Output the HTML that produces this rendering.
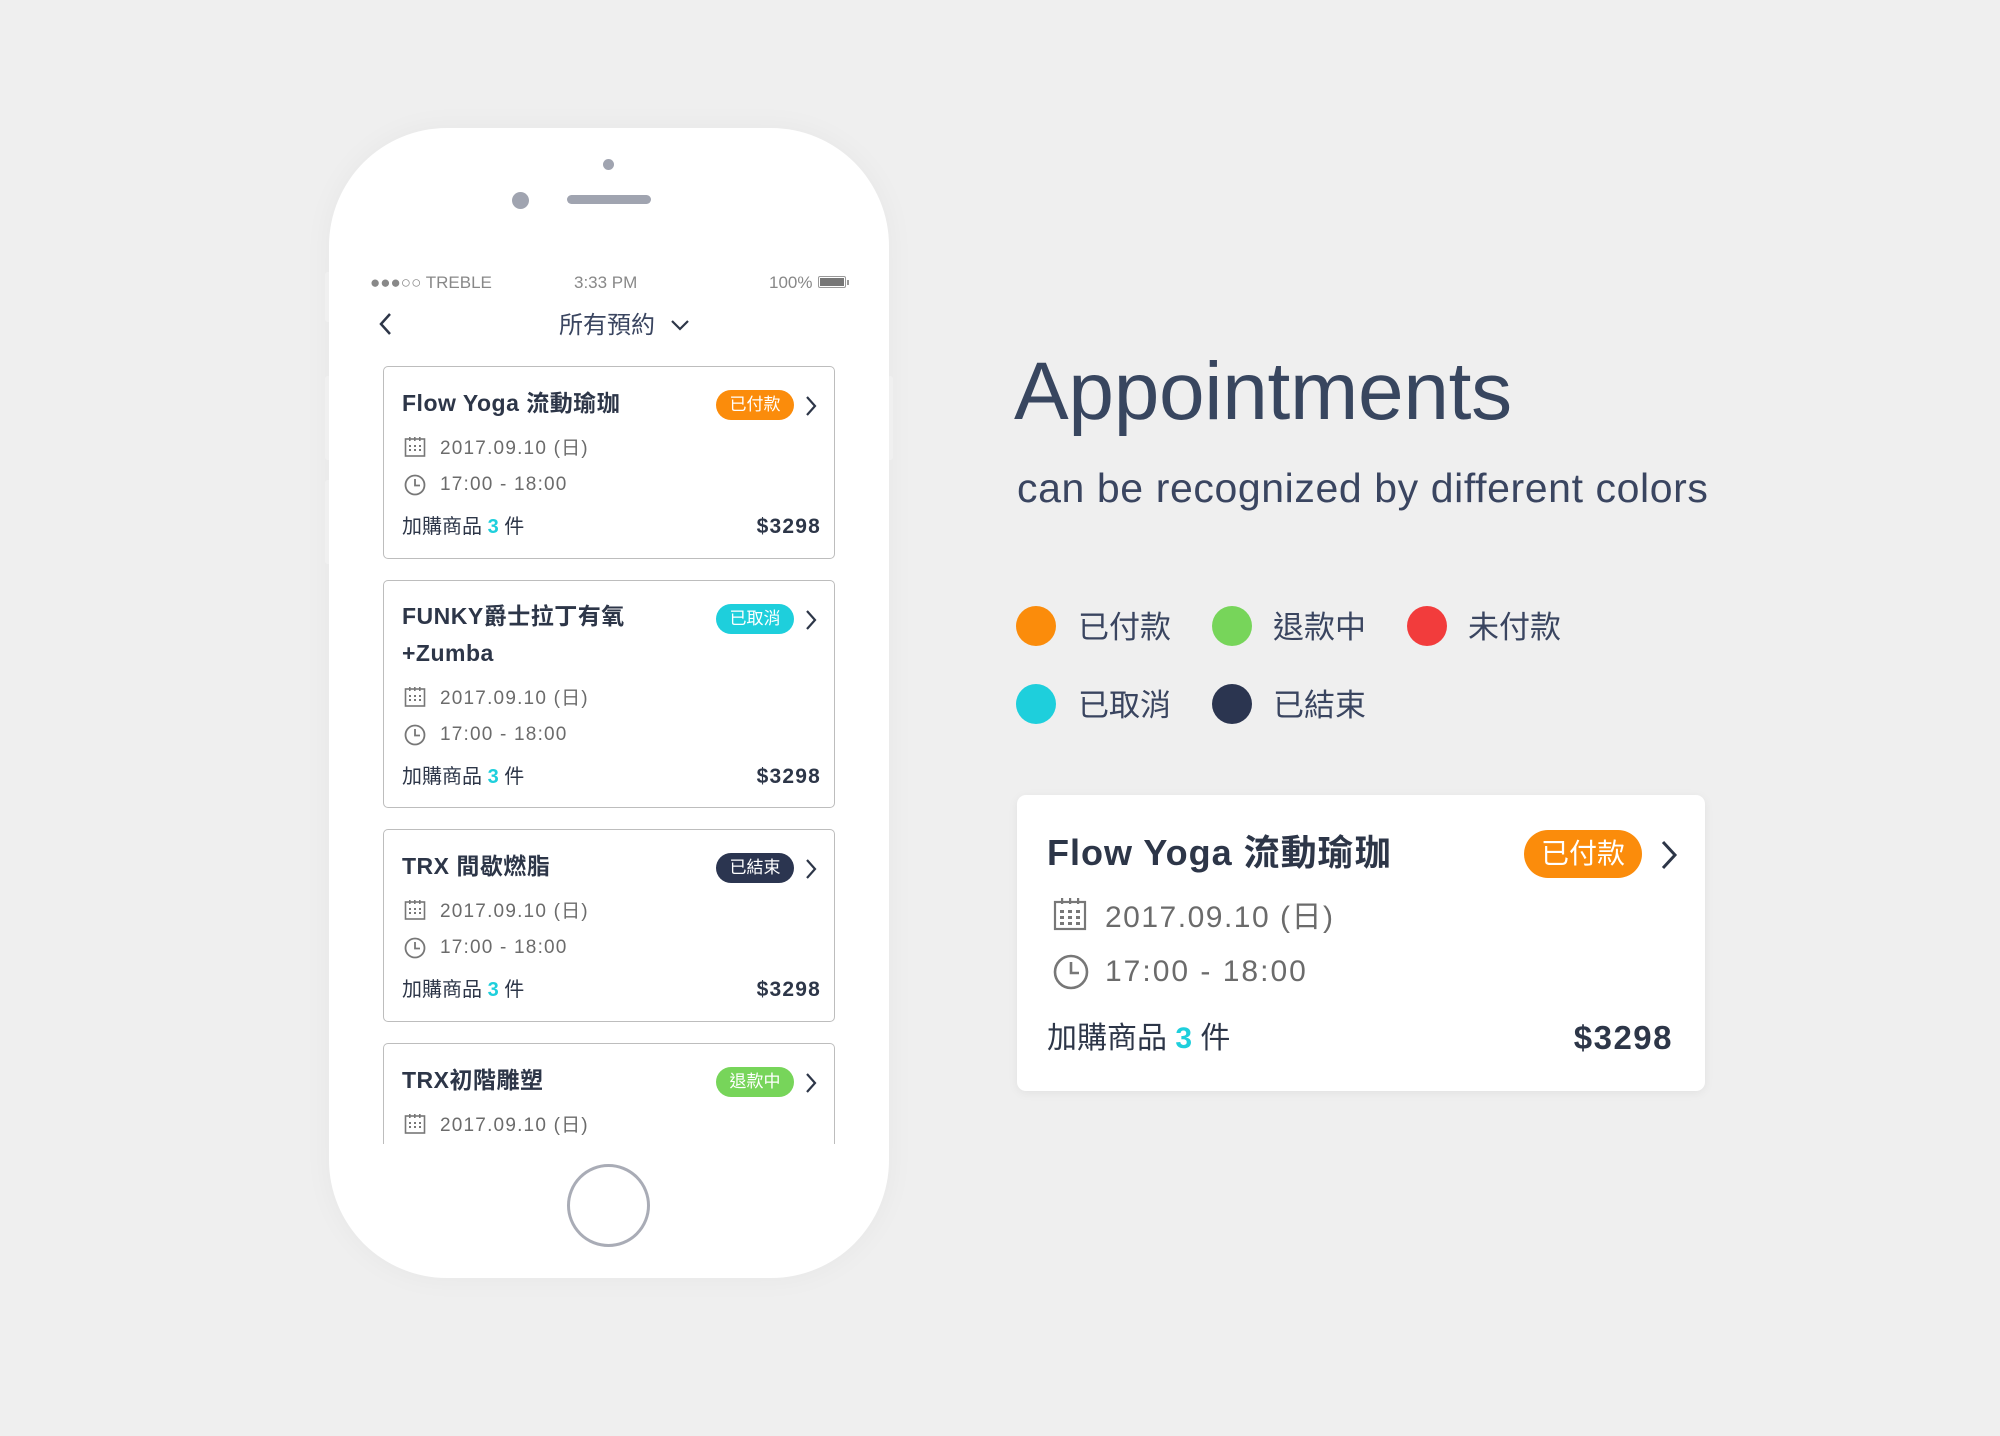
<!DOCTYPE html>
<html><head><meta charset="utf-8">
<style>
*{margin:0;padding:0;box-sizing:border-box}
body{width:2000px;height:1436px;background:#efefef;position:relative;overflow:hidden;font-family:"Liberation Sans","Noto Sans CJK TC",sans-serif;color:#2d3648}
.abs{position:absolute}
.phone{left:329px;top:128px;width:560px;height:1150px;background:#fff;border-radius:118px;box-shadow:0 0 30px rgba(0,0,0,0.04)}
.btn{background:#f4f4f4;width:6px;border-radius:3px}
.card{position:absolute;left:383px;width:452px;border:1.5px solid #bdbdbd;border-radius:5px;background:#fff}
.t{position:absolute;left:18px;font-weight:bold;font-size:23px;color:#2d3648;letter-spacing:0.5px;white-space:nowrap}
.badge{position:absolute;left:332px;width:78px;height:30px;border-radius:15px;color:#fff;font-size:17px;text-align:center;line-height:30px}
.chev{position:absolute;left:420px}
.row{position:absolute;left:20px;font-size:19px;color:#6b6b6b;letter-spacing:1.2px;white-space:nowrap;display:flex;align-items:center}
.row svg{margin-right:14px}
.bot{position:absolute;left:18px;right:13px;font-size:20px;color:#2d3648;display:flex;justify-content:space-between;align-items:center}
.bot b{letter-spacing:1.2px;font-size:21px;position:relative;top:2px}
.n{color:#1ecfdc;font-weight:bold}
.dot{position:absolute;width:40px;height:40px;border-radius:50%}
.lab{position:absolute;font-size:31px;color:#3a4560}
</style></head><body>
<div class="abs btn" style="left:325px;top:272px;height:50px"></div>
<div class="abs btn" style="left:325px;top:376px;height:84px"></div>
<div class="abs btn" style="left:325px;top:480px;height:84px"></div>
<div class="abs btn" style="left:887px;top:376px;height:84px"></div>
<div class="abs phone"></div>
<div class="abs" style="left:603px;top:159px;width:11px;height:11px;border-radius:50%;background:#a0a4b0"></div>
<div class="abs" style="left:512px;top:192px;width:17px;height:17px;border-radius:50%;background:#a0a4b0"></div>
<div class="abs" style="left:567px;top:195px;width:84px;height:9px;border-radius:5px;background:#a0a4b0"></div>
<div class="abs" style="left:370px;top:273px;font-size:17px;color:#888">●●●○○ TREBLE</div>
<div class="abs" style="left:574px;top:273px;font-size:17px;color:#888">3:33 PM</div>
<div class="abs" style="left:769px;top:273px;font-size:17px;color:#888">100%</div>
<div class="abs" style="left:818px;top:276px;width:28px;height:12px;border:1px solid #999;border-radius:2px;padding:1px"><div style="width:100%;height:100%;background:#777"></div></div>
<div class="abs" style="left:847px;top:280px;width:2px;height:5px;background:#999"></div>
<svg class="abs" style="left:378px;top:312px" width="16" height="24"><path d="M12 2 L3 12 L12 22" stroke="#2d3648" stroke-width="2.5" fill="none"/></svg>
<div class="abs" style="left:559px;top:305px;font-size:24px;color:#3a4560">所有預約</div>
<svg class="abs" style="left:670px;top:318px" width="20" height="14"><path d="M2 3 L10 11 L18 3" stroke="#2d3648" stroke-width="2.2" fill="none"/></svg>

<div class="card" style="top:366px;height:193px">
 <div class="t" style="top:17px">Flow Yoga 流動瑜珈</div>
 <div class="badge" style="top:23px;background:#fb8c0b">已付款</div>
 <svg class="chev" style="top:28px" width="14" height="22"><path d="M3 2 L11 11 L3 20" stroke="#2d3648" stroke-width="2.2" fill="none"/></svg>
 <div class="row" style="top:66px"><svg width="22" height="22"><rect x="1.5" y="3" width="19" height="17" fill="none" stroke="#777" stroke-width="1.6"/><g fill="#777"><rect x="5" y="1" width="1.6" height="4"/><rect x="10" y="1" width="1.6" height="4"/><rect x="15" y="1" width="1.6" height="4"/><rect x="5" y="9" width="2" height="2"/><rect x="10" y="9" width="2" height="2"/><rect x="15" y="9" width="2" height="2"/><rect x="5" y="13" width="2" height="2"/><rect x="10" y="13" width="2" height="2"/><rect x="15" y="13" width="2" height="2"/></g></svg>2017.09.10 (日)</div>
 <div class="row" style="top:107px"><svg width="22" height="22"><circle cx="11" cy="11" r="9.5" fill="none" stroke="#777" stroke-width="1.8"/><path d="M11 5 V11.5 H16" stroke="#777" stroke-width="1.8" fill="none"/></svg>17:00 - 18:00</div>
 <div class="bot" style="top:143px"><span>加購商品 <span class="n">3</span> 件</span><b>$3298</b></div>
</div>

<div class="card" style="top:580px;height:228px">
 <div class="t" style="top:17px;line-height:37px">FUNKY爵士拉丁有氧<br>+Zumba</div>
 <div class="badge" style="top:23px;background:#1ecfdc">已取消</div>
 <svg class="chev" style="top:28px" width="14" height="22"><path d="M3 2 L11 11 L3 20" stroke="#2d3648" stroke-width="2.2" fill="none"/></svg>
 <div class="row" style="top:102px"><svg width="22" height="22"><rect x="1.5" y="3" width="19" height="17" fill="none" stroke="#777" stroke-width="1.6"/><g fill="#777"><rect x="5" y="1" width="1.6" height="4"/><rect x="10" y="1" width="1.6" height="4"/><rect x="15" y="1" width="1.6" height="4"/><rect x="5" y="9" width="2" height="2"/><rect x="10" y="9" width="2" height="2"/><rect x="15" y="9" width="2" height="2"/><rect x="5" y="13" width="2" height="2"/><rect x="10" y="13" width="2" height="2"/><rect x="15" y="13" width="2" height="2"/></g></svg>2017.09.10 (日)</div>
 <div class="row" style="top:143px"><svg width="22" height="22"><circle cx="11" cy="11" r="9.5" fill="none" stroke="#777" stroke-width="1.8"/><path d="M11 5 V11.5 H16" stroke="#777" stroke-width="1.8" fill="none"/></svg>17:00 - 18:00</div>
 <div class="bot" style="top:179px"><span>加購商品 <span class="n">3</span> 件</span><b>$3298</b></div>
</div>

<div class="card" style="top:829px;height:193px">
 <div class="t" style="top:17px">TRX 間歇燃脂</div>
 <div class="badge" style="top:23px;background:#2b3550">已結束</div>
 <svg class="chev" style="top:28px" width="14" height="22"><path d="M3 2 L11 11 L3 20" stroke="#2d3648" stroke-width="2.2" fill="none"/></svg>
 <div class="row" style="top:66px"><svg width="22" height="22"><rect x="1.5" y="3" width="19" height="17" fill="none" stroke="#777" stroke-width="1.6"/><g fill="#777"><rect x="5" y="1" width="1.6" height="4"/><rect x="10" y="1" width="1.6" height="4"/><rect x="15" y="1" width="1.6" height="4"/><rect x="5" y="9" width="2" height="2"/><rect x="10" y="9" width="2" height="2"/><rect x="15" y="9" width="2" height="2"/><rect x="5" y="13" width="2" height="2"/><rect x="10" y="13" width="2" height="2"/><rect x="15" y="13" width="2" height="2"/></g></svg>2017.09.10 (日)</div>
 <div class="row" style="top:107px"><svg width="22" height="22"><circle cx="11" cy="11" r="9.5" fill="none" stroke="#777" stroke-width="1.8"/><path d="M11 5 V11.5 H16" stroke="#777" stroke-width="1.8" fill="none"/></svg>17:00 - 18:00</div>
 <div class="bot" style="top:143px"><span>加購商品 <span class="n">3</span> 件</span><b>$3298</b></div>
</div>

<div class="card" style="top:1043px;height:120px;border-bottom:none;border-radius:5px 5px 0 0">
 <div class="t" style="top:17px">TRX初階雕塑</div>
 <div class="badge" style="top:23px;background:#77d55a">退款中</div>
 <svg class="chev" style="top:28px" width="14" height="22"><path d="M3 2 L11 11 L3 20" stroke="#2d3648" stroke-width="2.2" fill="none"/></svg>
 <div class="row" style="top:66px"><svg width="22" height="22"><rect x="1.5" y="3" width="19" height="17" fill="none" stroke="#777" stroke-width="1.6"/><g fill="#777"><rect x="5" y="1" width="1.6" height="4"/><rect x="10" y="1" width="1.6" height="4"/><rect x="15" y="1" width="1.6" height="4"/><rect x="5" y="9" width="2" height="2"/><rect x="10" y="9" width="2" height="2"/><rect x="15" y="9" width="2" height="2"/><rect x="5" y="13" width="2" height="2"/><rect x="10" y="13" width="2" height="2"/><rect x="15" y="13" width="2" height="2"/></g></svg>2017.09.10 (日)</div>
</div>
<div class="abs" style="left:360px;top:1144px;width:500px;height:30px;background:#fff"></div>
<div class="abs" style="left:567px;top:1164px;width:83px;height:83px;border-radius:50%;border:3.5px solid #a9acb6"></div>

<div class="abs" style="left:1014px;top:345px;font-size:82px;color:#38465f;letter-spacing:-0.3px">Appointments</div>
<div class="abs" style="left:1017px;top:465px;font-size:41px;color:#3a4560;letter-spacing:0.6px">can be recognized by different colors</div>

<div class="dot" style="left:1016px;top:606px;background:#fb8c0b"></div><div class="lab" style="left:1078px;top:602px">已付款</div>
<div class="dot" style="left:1212px;top:606px;background:#77d55a"></div><div class="lab" style="left:1273px;top:602px">退款中</div>
<div class="dot" style="left:1407px;top:606px;background:#f23c3c"></div><div class="lab" style="left:1468px;top:602px">未付款</div>
<div class="dot" style="left:1016px;top:684px;background:#1ecfdc"></div><div class="lab" style="left:1078px;top:680px">已取消</div>
<div class="dot" style="left:1212px;top:684px;background:#2b3550"></div><div class="lab" style="left:1273px;top:680px">已結束</div>

<div class="abs" style="left:1017px;top:795px;width:688px;height:296px;background:#fff;border-radius:9px;box-shadow:0 2px 10px rgba(0,0,0,0.06)">
 <div class="abs" style="left:30px;top:29px;font-size:36px;font-weight:bold;color:#2d3648;letter-spacing:1px">Flow Yoga 流動瑜珈</div>
 <div class="abs" style="left:507px;top:35px;width:118px;height:48px;border-radius:24px;background:#fb8c0b;color:#fff;font-size:28px;text-align:center;line-height:48px">已付款</div>
 <svg class="abs" style="left:642px;top:44px" width="20" height="32"><path d="M4 3 L16 16 L4 29" stroke="#2d3648" stroke-width="3" fill="none"/></svg>
 <div class="abs" style="left:36px;top:97px;font-size:30px;color:#6b6b6b;letter-spacing:1.5px;display:flex;align-items:center;white-space:nowrap"><svg width="34" height="34" style="margin-right:18px"><rect x="2" y="5" width="30" height="27" fill="none" stroke="#777" stroke-width="2.2"/><g fill="#777"><rect x="8" y="1" width="2.2" height="6"/><rect x="16" y="1" width="2.2" height="6"/><rect x="24" y="1" width="2.2" height="6"/><rect x="7" y="13" width="4" height="3"/><rect x="15" y="13" width="4" height="3"/><rect x="23" y="13" width="4" height="3"/><rect x="7" y="19" width="4" height="3"/><rect x="15" y="19" width="4" height="3"/><rect x="23" y="19" width="4" height="3"/><rect x="7" y="25" width="4" height="3"/><rect x="15" y="25" width="4" height="3"/><rect x="23" y="25" width="4" height="3"/></g></svg>2017.09.10 (日)</div>
 <div class="abs" style="left:36px;top:159px;font-size:30px;color:#6b6b6b;letter-spacing:2px;display:flex;align-items:center;white-space:nowrap"><svg width="36" height="36" style="margin-right:16px"><circle cx="18" cy="18" r="16" fill="none" stroke="#777" stroke-width="2.6"/><path d="M18 8 V19 H26" stroke="#777" stroke-width="2.6" fill="none"/></svg>17:00 - 18:00</div>
 <div class="abs" style="left:30px;right:32px;top:218px;font-size:30px;color:#2d3648;display:flex;justify-content:space-between;align-items:center"><span>加購商品 <span class="n">3</span> 件</span><b style="font-size:33px;letter-spacing:1.5px;position:relative;top:3px">$3298</b></div>
</div>
</body></html>
